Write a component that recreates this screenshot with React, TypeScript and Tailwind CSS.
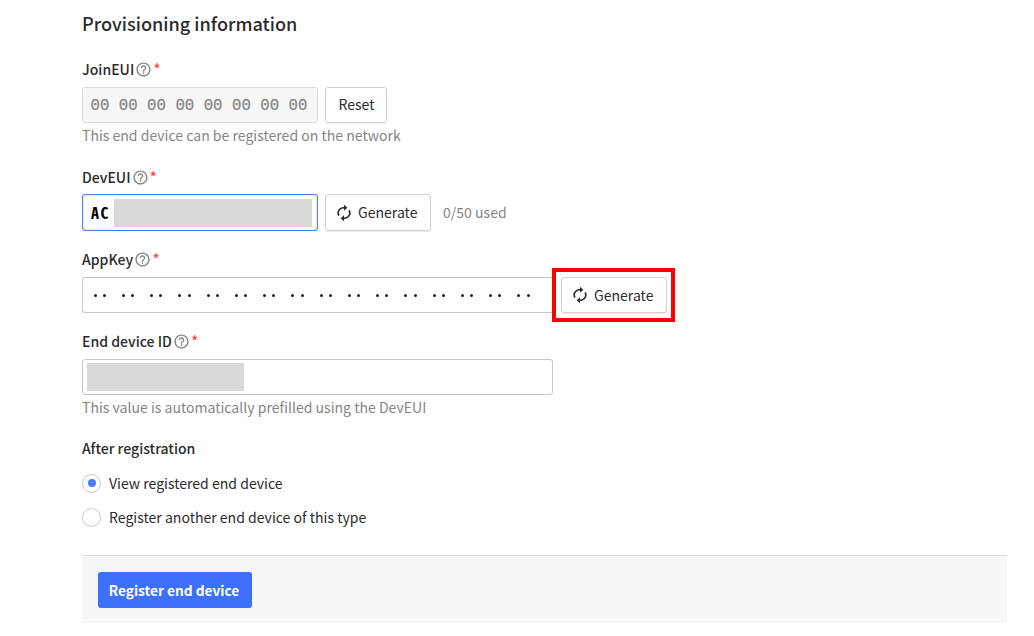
import type { ReactNode } from 'react'

function HelpIcon() {
  return (
    <svg viewBox="0 0 24 24" className="ml-px h-[17px] w-[17px] shrink-0" fill="#858585">
      <path d="M11 18h2v-2h-2v2zm1-16C6.48 2 2 6.48 2 12s4.48 10 10 10 10-4.48 10-10S17.52 2 12 2zm0 18c-4.41 0-8-3.59-8-8s3.59-8 8-8 8 3.59 8 8-3.59 8-8 8zm0-14c-2.21 0-4 1.79-4 4h2c0-1.1.9-2 2-2s2 .9 2 2c0 2-3 1.75-3 5h2c0-2.25 3-2.5 3-5 0-2.21-1.79-4-4-4z" />
    </svg>
  )
}

function RefreshIcon() {
  return (
    <svg viewBox="0 0 24 24" preserveAspectRatio="none" className="h-[18px] w-5 shrink-0" fill="#2b2b2b">
      <path d="M12 6v3l4-4-4-4v3c-4.42 0-8 3.58-8 8 0 1.57.46 3.03 1.24 4.26L6.7 14.8c-.45-.83-.7-1.79-.7-2.8 0-3.31 2.69-6 6-6zm6.76 1.74L17.3 9.2c.44.84.7 1.79.7 2.8 0 3.31-2.69 6-6 6v-3l-4 4 4 4v-3c4.42 0 8-3.58 8-8 0-1.57-.46-3.03-1.24-4.26z" />
    </svg>
  )
}

function Label({ children }: { children: ReactNode }) {
  return (
    <div className="flex h-5 items-center text-[14.05px] leading-5 font-medium">
      <span>{children}</span>
      <HelpIcon />
      <span className="-mt-px ml-px text-[16px] font-normal text-[#ff3b3b]">*</span>
    </div>
  )
}

function GenerateButton() {
  return (
    <button className="flex h-full w-[106px] items-center rounded-[3px] border border-[#d0d0d0] bg-white pl-2 shadow-[0_1px_1px_rgba(0,0,0,0.08)]">
      <RefreshIcon />
      <span className="-mt-px ml-1">Generate</span>
    </button>
  )
}

function Radio({ checked, children }: { checked?: boolean; children: ReactNode }) {
  return (
    <label className="flex h-[34px] items-center gap-2">
      <span className="flex h-[19px] w-[19px] items-center justify-center rounded-full border border-[#c8c8c8]">
        {checked && <span className="h-2 w-2 rounded-full bg-[#4a7dff]" />}
      </span>
      <span>{children}</span>
    </label>
  )
}

const joinBytes = Array.from({ length: 8 }, () => '00')
const keyBytes = Array.from({ length: 16 }, (_, i) => i)

export default function App() {
  return (
    <main className="h-[636px] w-[1034px] overflow-hidden bg-white pl-[82px] font-['Noto_Sans_CJK_SC',sans-serif] text-[14.05px] leading-5 text-[#2b2b2b]">
      <h1 className="h-[37px] pt-[9px] text-[18.1px] leading-7 font-medium">Provisioning information</h1>

      <section className="mt-[22px]">
        <Label>JoinEUI</Label>
        <div className="mt-2 flex h-9 gap-[7px]">
          <div className="flex w-[236px] items-center rounded-[3px] border border-[#dcdcdc] bg-[#f7f7f7] pt-[2px] pl-[7.5px] font-['Liberation_Mono',monospace] text-[15.7px] text-[#858585] [-webkit-text-stroke:0.25px_#858585]">
            {joinBytes.map((byte, i) => (
              <span key={i} className="w-[28.3px] shrink-0">{byte}</span>
            ))}
          </div>
          <button className="w-[62px] rounded-[3px] border border-[#d0d0d0] bg-white pb-[2px] pl-px shadow-[0_1px_1px_rgba(0,0,0,0.08)]">Reset</button>
        </div>
        <p className="mt-[2px] text-[#858585]">This end device can be registered on the network</p>
      </section>

      <section className="mt-[22px]">
        <Label>DevEUI</Label>
        <div className="mt-[7px] flex h-[37px] items-center gap-[7px]">
          <div className="flex h-full w-[236px] items-center rounded-[3px] border border-[#4a7dff] pl-2 shadow-[inset_0_0_1px_#4a7dff]">
            <span className="-mt-[2px] w-[23px] shrink-0 font-['Noto_Sans_Mono_CJK_SC','DejaVu_Sans_Mono',monospace] text-[16px] font-bold tracking-[1.5px] text-black">AC</span>
            <span className="h-7 w-[198px] shrink-0 bg-[#d9d9d9]" />
          </div>
          <GenerateButton />
          <span className="-mt-[2px] ml-[5px] text-[#858585]">0/50 used</span>
        </div>
      </section>

      <section className="mt-[18px]">
        <Label>AppKey</Label>
        <div className="flex h-[54px]">
          <div className="mt-2 flex h-9 w-[470px] items-center rounded-l-[3px] border border-r-0 border-[#c8c8c8] pt-px pl-[10.5px]">
            {keyBytes.map((i) => (
              <span key={i} className="flex w-[28.25px] shrink-0 gap-[6.4px]">
                <span className="h-[3px] w-[3px] rounded-full bg-[#1f1f2b]" />
                <span className="h-[3px] w-[3px] rounded-full bg-[#1f1f2b]" />
              </span>
            ))}
          </div>
          <div className="-mt-px h-[54px] w-[123px] border-4 border-[#ff0000] px-[5px] py-[5px]">
            <GenerateButton />
          </div>
        </div>
      </section>

      <section className="mt-[8px]">
        <Label>End device ID</Label>
        <div className="mt-2 flex h-9 w-[471px] items-center rounded-[3px] border border-[#c8c8c8] pl-1">
          <span className="h-7 w-[157px] bg-[#d9d9d9]" />
        </div>
        <p className="mt-[2px] text-[#858585]">This value is automatically prefilled using the DevEUI</p>
      </section>

      <section className="mt-[21px]">
        <h2 className="font-medium">After registration</h2>
        <div className="mt-2">
          <Radio checked>View registered end device</Radio>
          <Radio>Register another end device of this type</Radio>
        </div>
      </section>

      <footer className="mt-[21px] h-[68px] w-[925px] border-t border-[#dcdcdc] bg-[#f7f7f7] px-4 pt-4">
        <button className="h-9 w-[154px] rounded-[3px] bg-[#3d70ff] pr-[2px] pb-px text-[13.7px] font-bold text-white">Register end device</button>
      </footer>
    </main>
  )
}
